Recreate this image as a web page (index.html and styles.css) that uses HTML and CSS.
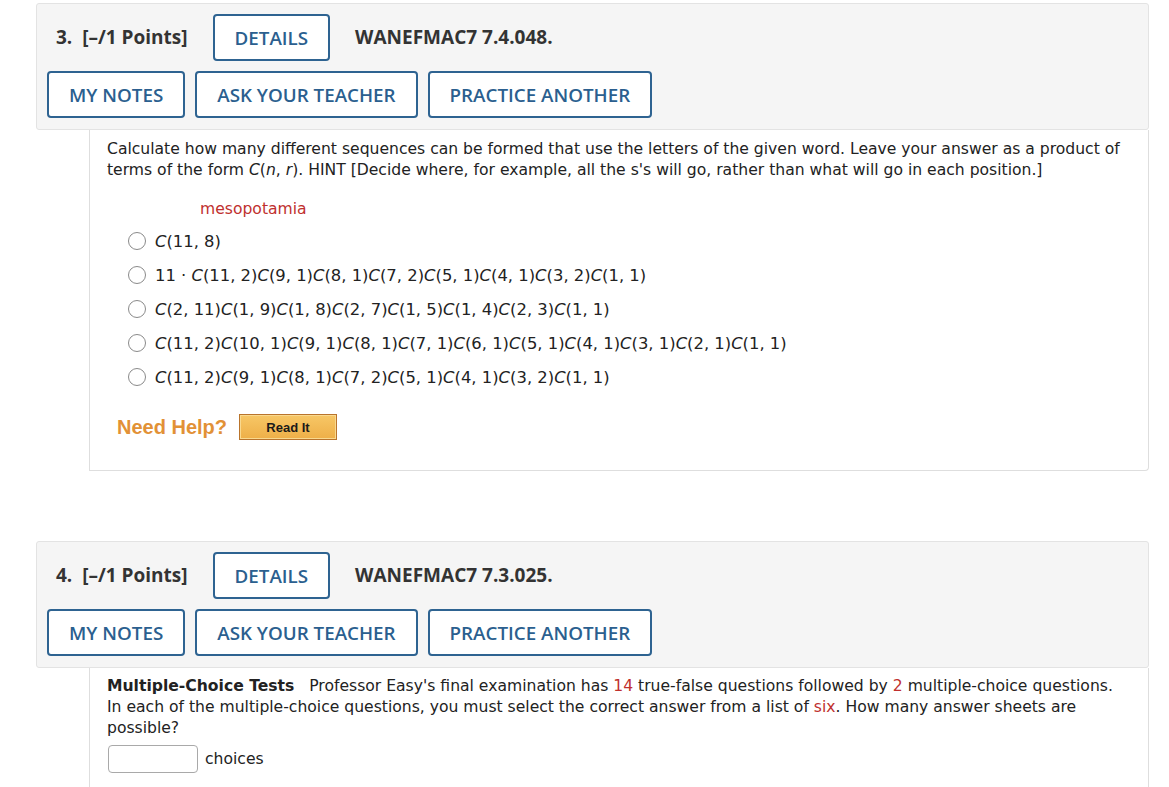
FILE: index.html
```html
<!DOCTYPE html>
<html lang="en">

<head>
  <meta charset="UTF-8">
  <meta name="viewport" content="width=device-width, initial-scale=1.0">
  <title>Assignment</title>
  <link rel="stylesheet" href="styles.css">
</head>

<body>
  <div class="question">
    <div class="q-header">
      <div class="q-row">
        <span class="q-label">3.&nbsp; [–/1 Points]</span>
        <button class="q-btn" type="button">DETAILS</button>
        <span class="q-label q-code">WANEFMAC7 7.4.048.</span>
      </div>
      <div class="q-row q-actions">
        <button class="q-btn" type="button">MY NOTES</button>
        <button class="q-btn" type="button">ASK YOUR TEACHER</button>
        <button class="q-btn" type="button">PRACTICE ANOTHER</button>
      </div>
    </div>
    <div class="q-body">
      <p>Calculate how many different sequences can be formed that use the letters of the given word. Leave your answer as a product of terms of the form <i>C</i>(<i>n</i>, <i>r</i>). HINT [Decide where, for example, all the s's will go, rather than what will go in each position.]</p>
      <p class="word">mesopotamia</p>
      <ul class="options">
        <li><span class="radio"></span><span><i>C</i>(11, 8)</span></li>
        <li><span class="radio"></span><span>11 · <i>C</i>(11, 2)<i>C</i>(9, 1)<i>C</i>(8, 1)<i>C</i>(7, 2)<i>C</i>(5, 1)<i>C</i>(4, 1)<i>C</i>(3, 2)<i>C</i>(1, 1)</span></li>
        <li><span class="radio"></span><span><i>C</i>(2, 11)<i>C</i>(1, 9)<i>C</i>(1, 8)<i>C</i>(2, 7)<i>C</i>(1, 5)<i>C</i>(1, 4)<i>C</i>(2, 3)<i>C</i>(1, 1)</span></li>
        <li><span class="radio"></span><span><i>C</i>(11, 2)<i>C</i>(10, 1)<i>C</i>(9, 1)<i>C</i>(8, 1)<i>C</i>(7, 1)<i>C</i>(6, 1)<i>C</i>(5, 1)<i>C</i>(4, 1)<i>C</i>(3, 1)<i>C</i>(2, 1)<i>C</i>(1, 1)</span></li>
        <li><span class="radio"></span><span><i>C</i>(11, 2)<i>C</i>(9, 1)<i>C</i>(8, 1)<i>C</i>(7, 2)<i>C</i>(5, 1)<i>C</i>(4, 1)<i>C</i>(3, 2)<i>C</i>(1, 1)</span></li>
      </ul>
      <div class="help">
        <span class="help-label">Need Help?</span>
        <button class="read-it" type="button">Read It</button>
      </div>
    </div>
  </div>

  <div class="question second">
    <div class="q-header">
      <div class="q-row">
        <span class="q-label">4.&nbsp; [–/1 Points]</span>
        <button class="q-btn" type="button">DETAILS</button>
        <span class="q-label q-code">WANEFMAC7 7.3.025.</span>
      </div>
      <div class="q-row q-actions">
        <button class="q-btn" type="button">MY NOTES</button>
        <button class="q-btn" type="button">ASK YOUR TEACHER</button>
        <button class="q-btn" type="button">PRACTICE ANOTHER</button>
      </div>
    </div>
    <div class="q-body q-body-short">
      <p><b>Multiple-Choice Tests</b>&nbsp;&nbsp; Professor Easy's final examination has <span class="red">14</span> true-false questions followed by <span class="red">2</span> multiple-choice questions. In each of the multiple-choice questions, you must select the correct answer from a list of <span class="red">six</span>. How many answer sheets are possible?</p>
      <div class="answer">
        <input type="text" class="answer-input" aria-label="answer">
        <span>choices</span>
      </div>
    </div>
  </div>
</body>

</html>
```

FILE: styles.css
```css
* {
  margin: 0;
  padding: 0;
  box-sizing: border-box;
}

body {
  font-family: "DejaVu Sans", Verdana, sans-serif;
  font-size: 15.6px;
  line-height: 21px;
  color: #222;
  background: white;
}

.question {
  margin: 3px 20px 0 36px;
}

.question.second {
  margin-top: 70px;
}

.q-header {
  background: #f5f5f5;
  border: 1px solid #e3e3e3;
  border-radius: 3px;
  padding: 10px 10px 11px;
  display: flex;
  flex-direction: column;
  gap: 10px;
}

.q-row {
  display: flex;
  align-items: center;
  gap: 25px;
}

.q-actions {
  gap: 10px;
}

.q-label {
  font-family: "Open Sans", sans-serif;
  font-weight: 700;
  font-size: 19px;
  color: #333;
  padding-left: 9px;
}

.q-code {
  padding-left: 0;
}

.q-btn {
  font-family: "Open Sans", sans-serif;
  font-weight: 600;
  font-size: 18.8px;
  color: #2b5f8f;
  background: white;
  border: 2px solid #2e6391;
  border-radius: 4px;
  height: 47px;
  padding: 0 20px;
  cursor: pointer;
}

.q-body {
  margin-left: 53px;
  border: 1px solid #dedede;
  border-top: none;
  border-bottom-right-radius: 4px;
  padding: 9px 17px 30px 17px;
}

.q-body-short {
  padding-top: 8px;
}

.word {
  color: #c0302e;
  padding-left: 93px;
  margin-top: 18px;
}

.options {
  list-style: none;
  margin-top: 4px;
  padding-left: 21px;
  font-size: 16.4px;
}

.options li {
  display: flex;
  align-items: center;
  height: 34px;
  gap: 9px;
}

.radio {
  width: 18px;
  height: 18px;
  border: 1.5px solid #8a8a8a;
  border-radius: 50%;
  background: white;
  flex-shrink: 0;
}

.help {
  display: flex;
  align-items: center;
  gap: 12px;
  margin-top: 20px;
  padding-left: 10px;
}

.help-label {
  font-family: "Liberation Sans", Arial, sans-serif;
  font-weight: 700;
  font-size: 20px;
  color: #e29136;
}

.read-it {
  font-family: "Liberation Sans", Arial, sans-serif;
  font-weight: 700;
  font-size: 13px;
  color: #1a1a1a;
  width: 98px;
  height: 26px;
  border: 1px solid #b9742c;
  box-shadow: inset 0 0 0 1px #f9d98f;
  background: linear-gradient(#f7c766, #eeaf48);
  cursor: pointer;
}

.red {
  color: #c0302e;
}

.answer {
  display: flex;
  align-items: center;
  gap: 7px;
  margin-top: 6px;
  padding-left: 1px;
}

.answer-input {
  width: 90px;
  height: 28px;
  border: 1px solid #a9a9a9;
  border-radius: 4px;
}
```
